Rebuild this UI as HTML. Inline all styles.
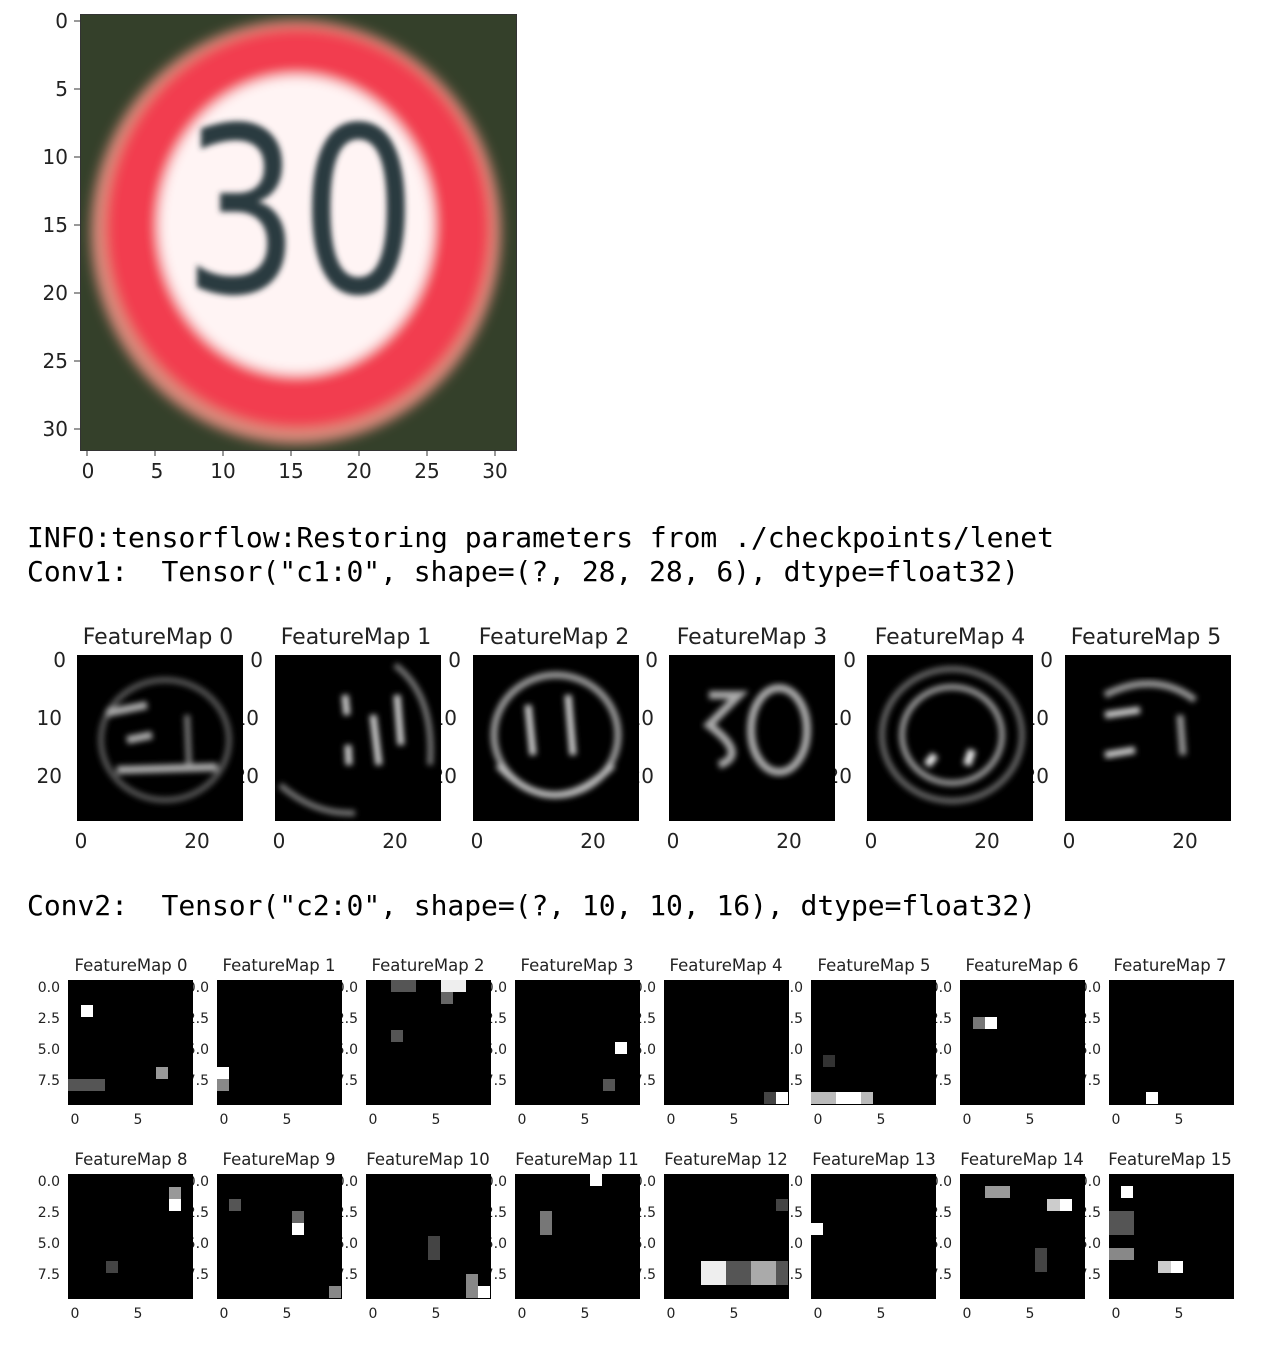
<!DOCTYPE html>
<html><head><meta charset="utf-8"><style>
html,body{margin:0;padding:0;background:#fff;width:1282px;height:1354px;overflow:hidden}
svg{display:block}
.t{font-family:"DejaVu Sans","Liberation Sans",sans-serif;fill:#222}
.m{font-family:"DejaVu Sans Mono","Liberation Mono",monospace;font-size:28px;fill:#000;white-space:pre}
</style></head><body>
<svg width="1282" height="1354" viewBox="0 0 1282 1354" xmlns="http://www.w3.org/2000/svg" xml:space="preserve">
<defs>
<filter id="b" x="-10%" y="-10%" width="120%" height="120%"><feGaussianBlur stdDeviation="6"/></filter>
<filter id="b2"><feGaussianBlur stdDeviation="3"/></filter>
<clipPath id="c0"><rect x="80" y="14" width="436" height="436"/></clipPath>
</defs>

<g clip-path="url(#c0)">
<rect x="80" y="14" width="436" height="436" fill="#34402a"/>
<g filter="url(#b)">
<ellipse cx="296" cy="232" rx="205" ry="212" fill="#d98a7c"/>
<ellipse cx="298" cy="228" rx="192" ry="200" fill="#f23c50"/>
<ellipse cx="296" cy="225" rx="138" ry="150" fill="#fff4f4"/>
</g>
<g filter="url(#b2)">
<text x="0" y="0" text-anchor="middle" font-family="DejaVu Sans,sans-serif" font-size="230" fill="#2c3a40" transform="translate(300,292) scale(0.8,1)">30</text>
</g>
</g>
<rect x="80.5" y="14.5" width="436" height="436" fill="none" stroke="#333"/>
<g stroke="#333">
<path d="M74 21h6M74 89h6M74 157h6M74 225h6M74 293h6M74 361h6M74 429h6M87 450v6M155 450v6M223 450v6M291 450v6M359 450v6M427 450v6M495 450v6"/>
</g>
<g class="t" font-size="20" text-anchor="end">
<text x="68" y="28">0</text><text x="68" y="96">5</text><text x="68" y="164">10</text><text x="68" y="232">15</text><text x="68" y="300">20</text><text x="68" y="368">25</text><text x="68" y="436">30</text>
</g>
<g class="t" font-size="20" text-anchor="middle">
<text x="88" y="478">0</text><text x="157" y="478">5</text><text x="223" y="478">10</text><text x="291" y="478">15</text><text x="359" y="478">20</text><text x="427" y="478">25</text><text x="495" y="478">30</text>
</g>

<text class="m" x="27" y="547" textLength="1027">INFO:tensorflow:Restoring parameters from ./checkpoints/lenet</text>
<text class="m" x="27" y="581" textLength="992">Conv1:  Tensor("c1:0", shape=(?, 28, 28, 6), dtype=float32)</text>
<text class="m" x="27" y="915" textLength="1009">Conv2:  Tensor("c2:0", shape=(?, 10, 10, 16), dtype=float32)</text>

<g class="t" font-size="20">
<g text-anchor="end">
<text x="66" y="667">0</text><text x="62" y="725">10</text><text x="62" y="783">20</text>
<text x="263" y="667">0</text><text x="259" y="725">10</text><text x="259" y="783">20</text>
<text x="461" y="667">0</text><text x="457" y="725">10</text><text x="457" y="783">20</text>
<text x="658" y="667">0</text><text x="654" y="725">10</text><text x="654" y="783">20</text>
<text x="856" y="667">0</text><text x="852" y="725">10</text><text x="852" y="783">20</text>
<text x="1053" y="667">0</text><text x="1049" y="725">10</text><text x="1049" y="783">20</text>
</g>
</g>
<g>
<g transform="translate(77,655)"><rect width="166" height="166" fill="#000"/><g filter="url(#b2)" fill="none" stroke="#777" stroke-width="6"><ellipse cx="88" cy="85" rx="64" ry="60" stroke="#555"/><path d="M30 58 L70 50 M50 85 L75 80 M40 115 L140 112" stroke="#aaa" stroke-width="8"/><path d="M110 60 L112 110" /></g></g>
<g transform="translate(275,655)"><rect width="166" height="166" fill="#000"/><g filter="url(#b2)" fill="none" stroke="#888" stroke-width="6"><path d="M5 130 Q40 160 80 158 M120 10 Q160 40 155 110" stroke="#777"/><path d="M70 40 L72 60 M73 90 L74 110 M98 60 L104 110 M122 40 L126 90" stroke="#ccc" stroke-width="7"/></g></g>
<g transform="translate(473,655)"><rect width="166" height="166" fill="#000"/><g filter="url(#b2)" fill="none" stroke="#999" stroke-width="7"><ellipse cx="83" cy="80" rx="62" ry="60"/><path d="M25 110 Q80 170 140 110" stroke="#bbb"/><path d="M55 50 L60 100 M95 40 L100 100" stroke="#ccc"/></g></g>
<g transform="translate(669,655)"><rect width="166" height="166" fill="#000"/><g filter="url(#b2)" fill="none" stroke="#aaa" stroke-width="8"><path d="M40 40 L70 40 L40 70 Q80 100 50 110"/><ellipse cx="110" cy="75" rx="28" ry="42"/></g></g>
<g transform="translate(867,655)"><rect width="166" height="166" fill="#000"/><g filter="url(#b2)" fill="none" stroke="#999" stroke-width="6"><ellipse cx="85" cy="80" rx="70" ry="66" stroke="#666"/><ellipse cx="85" cy="80" rx="50" ry="48"/><path d="M60 110 L68 100 M100 110 L105 95" stroke="#eee" stroke-width="8"/></g></g>
<g transform="translate(1065,655)"><rect width="166" height="166" fill="#000"/><g filter="url(#b2)" fill="none" stroke="#999" stroke-width="7"><path d="M40 40 Q90 15 130 45"/><path d="M40 60 L75 55 M40 100 L70 95" stroke="#ccc"/><path d="M115 60 L118 100"/></g></g>
</g>
<g class="t" font-size="22" text-anchor="middle">
<text x="158" y="644">FeatureMap 0</text><text x="356" y="644">FeatureMap 1</text><text x="554" y="644">FeatureMap 2</text><text x="752" y="644">FeatureMap 3</text><text x="950" y="644">FeatureMap 4</text><text x="1146" y="644">FeatureMap 5</text>
</g>
<g class="t" font-size="20" text-anchor="middle">
<text x="81" y="848">0</text><text x="197" y="848">20</text>
<text x="279" y="848">0</text><text x="395" y="848">20</text>
<text x="477" y="848">0</text><text x="593" y="848">20</text>
<text x="673" y="848">0</text><text x="789" y="848">20</text>
<text x="871" y="848">0</text><text x="987" y="848">20</text>
<text x="1069" y="848">0</text><text x="1185" y="848">20</text>
</g>

<g class="t" font-size="14" text-anchor="end">
<g id="yl1"><text x="60" y="992">0.0</text><text x="60" y="1023">2.5</text><text x="60" y="1054">5.0</text><text x="60" y="1085">7.5</text></g>
<use href="#yl1" x="149"/><use href="#yl1" x="298"/><use href="#yl1" x="447"/><use href="#yl1" x="596"/><use href="#yl1" x="743"/><use href="#yl1" x="892"/><use href="#yl1" x="1041"/>
<g id="yl2"><text x="60" y="1186">0.0</text><text x="60" y="1217">2.5</text><text x="60" y="1248">5.0</text><text x="60" y="1279">7.5</text></g>
<use href="#yl2" x="149"/><use href="#yl2" x="298"/><use href="#yl2" x="447"/><use href="#yl2" x="596"/><use href="#yl2" x="743"/><use href="#yl2" x="892"/><use href="#yl2" x="1041"/>
</g>

<g fill="#000">
<rect x="68" y="980" width="125" height="125"/><rect x="217" y="980" width="125" height="125"/><rect x="366" y="980" width="125" height="125"/><rect x="515" y="980" width="125" height="125"/><rect x="664" y="980" width="125" height="125"/><rect x="811" y="980" width="125" height="125"/><rect x="960" y="980" width="125" height="125"/><rect x="1109" y="980" width="125" height="125"/>
<rect x="68" y="1174" width="125" height="125"/><rect x="217" y="1174" width="125" height="125"/><rect x="366" y="1174" width="125" height="125"/><rect x="515" y="1174" width="125" height="125"/><rect x="664" y="1174" width="125" height="125"/><rect x="811" y="1174" width="125" height="125"/><rect x="960" y="1174" width="125" height="125"/><rect x="1109" y="1174" width="125" height="125"/>
</g>
<g>
<rect x="81" y="1005" width="12" height="12" fill="#fff"/><rect x="156" y="1067" width="12" height="12" fill="#999"/><rect x="68" y="1079" width="37" height="12" fill="#555"/>
<rect x="217" y="1067" width="12" height="12" fill="#fff"/><rect x="217" y="1079" width="12" height="12" fill="#888"/>
<rect x="441" y="980" width="25" height="12" fill="#eee"/><rect x="391" y="980" width="25" height="12" fill="#555"/><rect x="391" y="1030" width="12" height="12" fill="#555"/><rect x="441" y="992" width="12" height="12" fill="#666"/>
<rect x="615" y="1042" width="12" height="12" fill="#fff"/><rect x="603" y="1079" width="12" height="12" fill="#555"/>
<rect x="776" y="1092" width="12" height="12" fill="#fff"/><rect x="764" y="1092" width="12" height="12" fill="#444"/>
<rect x="811" y="1092" width="62" height="12" fill="#bbb"/><rect x="836" y="1092" width="25" height="12" fill="#fff"/><rect x="823" y="1055" width="12" height="12" fill="#333"/>
<rect x="985" y="1017" width="12" height="12" fill="#fff"/><rect x="973" y="1017" width="12" height="12" fill="#777"/>
<rect x="1146" y="1092" width="12" height="12" fill="#fff"/>
<rect x="169" y="1199" width="12" height="12" fill="#fff"/><rect x="169" y="1187" width="12" height="12" fill="#999"/><rect x="106" y="1261" width="12" height="12" fill="#444"/>
<rect x="292" y="1223" width="12" height="12" fill="#fff"/><rect x="292" y="1211" width="12" height="12" fill="#666"/><rect x="229" y="1199" width="12" height="12" fill="#555"/><rect x="329" y="1286" width="12" height="12" fill="#888"/>
<rect x="478" y="1286" width="12" height="12" fill="#fff"/><rect x="466" y="1274" width="12" height="24" fill="#888"/><rect x="428" y="1236" width="12" height="24" fill="#444"/>
<rect x="590" y="1174" width="12" height="12" fill="#fff"/><rect x="540" y="1211" width="12" height="24" fill="#777"/>
<rect x="701" y="1261" width="25" height="24" fill="#eee"/><rect x="726" y="1261" width="62" height="24" fill="#555"/><rect x="751" y="1261" width="25" height="24" fill="#aaa"/><rect x="776" y="1199" width="12" height="12" fill="#444"/>
<rect x="811" y="1223" width="12" height="12" fill="#fff"/>
<rect x="985" y="1186" width="25" height="12" fill="#999"/><rect x="1047" y="1199" width="25" height="12" fill="#ccc"/><rect x="1060" y="1199" width="12" height="12" fill="#fff"/><rect x="1035" y="1248" width="12" height="24" fill="#444"/>
<rect x="1121" y="1186" width="12" height="12" fill="#fff"/><rect x="1109" y="1248" width="25" height="12" fill="#888"/><rect x="1158" y="1261" width="25" height="12" fill="#ccc"/><rect x="1171" y="1261" width="12" height="12" fill="#fff"/><rect x="1109" y="1211" width="25" height="24" fill="#555"/>
</g>

<g class="t" font-size="16.5" text-anchor="middle">
<text x="131" y="971">FeatureMap 0</text><text x="279" y="971">FeatureMap 1</text><text x="428" y="971">FeatureMap 2</text><text x="577" y="971">FeatureMap 3</text><text x="726" y="971">FeatureMap 4</text><text x="874" y="971">FeatureMap 5</text><text x="1022" y="971">FeatureMap 6</text><text x="1170" y="971">FeatureMap 7</text>
<text x="131" y="1165">FeatureMap 8</text><text x="279" y="1165">FeatureMap 9</text><text x="428" y="1165">FeatureMap 10</text><text x="577" y="1165">FeatureMap 11</text><text x="726" y="1165">FeatureMap 12</text><text x="874" y="1165">FeatureMap 13</text><text x="1022" y="1165">FeatureMap 14</text><text x="1170" y="1165">FeatureMap 15</text>
</g>
<g class="t" font-size="14" text-anchor="middle">
<g id="xl1"><text x="75" y="1124">0</text><text x="138" y="1124">5</text></g>
<use href="#xl1" x="149"/><use href="#xl1" x="298"/><use href="#xl1" x="447"/><use href="#xl1" x="596"/><use href="#xl1" x="743"/><use href="#xl1" x="892"/><use href="#xl1" x="1041"/>
<g id="xl2"><text x="75" y="1318">0</text><text x="138" y="1318">5</text></g>
<use href="#xl2" x="149"/><use href="#xl2" x="298"/><use href="#xl2" x="447"/><use href="#xl2" x="596"/><use href="#xl2" x="743"/><use href="#xl2" x="892"/><use href="#xl2" x="1041"/>
</g>
</svg>
</body></html>
